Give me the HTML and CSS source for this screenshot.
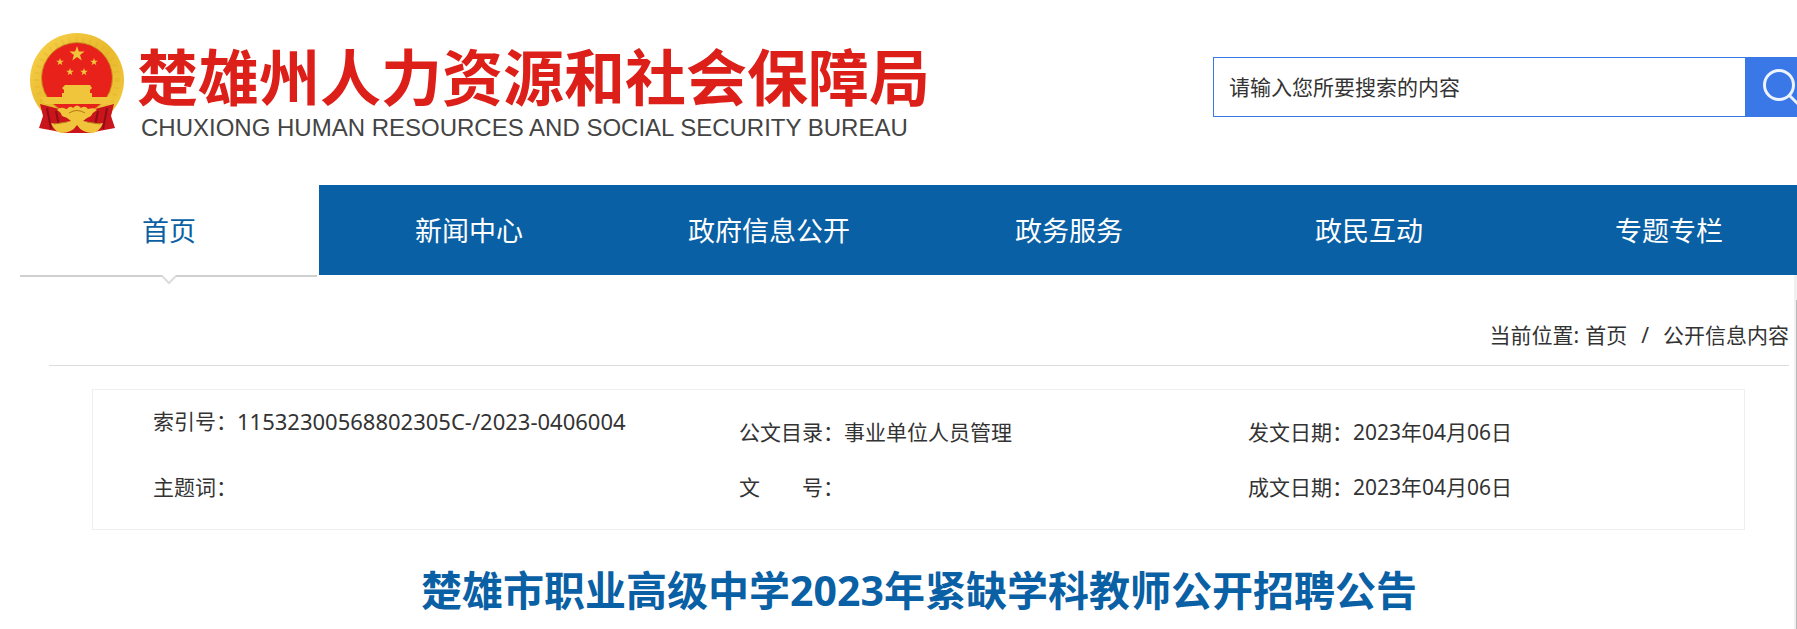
FILE: index.html
```html
<!DOCTYPE html>
<html lang="zh-CN">
<head>
<meta charset="utf-8">
<meta name="viewport" content="width=device-width, initial-scale=1">
<title>楚雄州人力资源和社会保障局</title>
<link rel="stylesheet" href="styles.css">
</head>
<body>
<div class="site-top">
  <header class="header">
    <a class="logo" href="#">
      <svg class="emblem" viewBox="0 0 96 102" aria-hidden="true">
        <defs>
          <linearGradient id="gold" x1="0" y1="0" x2="1" y2="1">
            <stop offset="0" stop-color="#f8d44c"/>
            <stop offset=".5" stop-color="#e9b92d"/>
            <stop offset="1" stop-color="#f3cb3f"/>
          </linearGradient>
          <path id="star" d="M0-10 2.4-3.1 9.5-3.1 3.8 1.2 5.9 8.1 0 3.900-5.9 8.1-3.8 1.2-9.500-3.1-2.4-3.1z"/>
        </defs>
        <circle cx="48" cy="48" r="47" fill="url(#gold)"/>
        <circle cx="48" cy="48" r="40.500" fill="none" stroke="#d3a023" stroke-width="5" stroke-dasharray="2 5" opacity=".2"/>
        <circle cx="48" cy="46" r="35.500" fill="#e8221b" stroke="#c99522" stroke-width="1"/>
        <path d="M11 72 30 77 48 84 66 77 85 72 82 84 86 96 70 99 60 101 36 101 26 99 10 96 14 84z" fill="#c9151b"/>
        <path d="M18 76 22 97M27 79 31 99M78 76 74 97M69 79 65 99" stroke="#8f0d14" stroke-width="2" fill="none"/>
        <g fill="#f0c53c">
          <use href="#star" transform="translate(48 22) scale(.8)"/>
          <use href="#star" transform="translate(31 30) scale(.4)"/>
          <use href="#star" transform="translate(65 30) scale(.4)"/>
          <use href="#star" transform="translate(41 40) scale(.4)"/>
          <use href="#star" transform="translate(55 40) scale(.4)"/>
          <path d="M36 53h25l2 3-2 2v3H35v-3l-2-2z"/>
          <path d="M33 61h30v4h21l-4 7H16l-4-7h21z"/>
          <path d="M38 77q3-4 6-1 4-5 8 0 4-3 7 1 6-2 9 1-4 2-6 6-5 2-8 5l10 2q6 1 10 0-3 8-10 10-11 0-16-8-5 8-16 8-7-2-10-10 4 1 10 0l10-2q-4-4-9-5-1-4-5-6 4-4 9-1z"/>
        </g>
        <path d="M38 90l-13 2M58 90l13 2M40 81q8-5 16 0" stroke="#b67b14" fill="none"/>
      </svg>
      <span class="logo-text">
        <span class="logo-cn">楚雄州人力资源和社会保障局</span>
        <span class="logo-en">CHUXIONG HUMAN RESOURCES AND SOCIAL SECURITY BUREAU</span>
      </span>
    </a>
    <form class="search" role="search">
      <input class="search-input" type="text" placeholder="请输入您所要搜索的内容" aria-label="请输入您所要搜索的内容">
      <button class="search-button" type="submit" aria-label="搜索">
        <svg class="search-icon" viewBox="0 0 40 40" aria-hidden="true">
          <circle cx="17" cy="18" r="14.500"/>
          <path d="M27 28 38 39"/>
        </svg>
      </button>
    </form>
  </header>
  <nav class="nav">
    <a class="nav-item nav-current" href="#">首页
      <svg class="nav-notch" viewBox="0 0 16 10" aria-hidden="true"><path class="notch-fill" d="M1 0 8 8 15 0z"/><path class="notch-line" d="M1 1 8 8 15 1"/></svg>
    </a>
    <a class="nav-item" href="#">新闻中心</a>
    <a class="nav-item" href="#">政府信息公开</a>
    <a class="nav-item" href="#">政务服务</a>
    <a class="nav-item" href="#">政民互动</a>
    <a class="nav-item" href="#">专题专栏</a>
  </nav>
</div>
<div class="body-row">
  <main class="content">
    <div class="breadcrumb">
      <span>当前位置:</span>
      <a href="#">首页</a>
      <span class="slash">/</span>
      <a href="#">公开信息内容</a>
    </div>
    <dl class="meta">
      <div class="meta-item meta-index"><dt>索引号：</dt><dd>11532300568802305C-/2023-0406004</dd></div>
      <div class="meta-item"><dt>公文目录：</dt><dd>事业单位人员管理</dd></div>
      <div class="meta-item"><dt>发文日期：</dt><dd>2023年04月06日</dd></div>
      <div class="meta-item"><dt>主题词：</dt><dd></dd></div>
      <div class="meta-item"><dt>文　　号：</dt><dd></dd></div>
      <div class="meta-item"><dt>成文日期：</dt><dd>2023年04月06日</dd></div>
    </dl>
    <h1 class="title">楚雄市职业高级中学2023年紧缺学科教师公开招聘公告</h1>
  </main>
  <div class="scroll-track"><div class="scroll-thumb"></div></div>
</div>
</body>
</html>
```

FILE: styles.css
```css
* {
  box-sizing: border-box;
}

body {
  margin: 0;
  min-height: 100vh;
  display: flex;
  flex-direction: column;
  overflow-x: hidden;
  background: #fff;
  color: #333;
  font: 21px/30px "Noto Sans", "Noto Sans CJK SC", sans-serif;
}

a {
  color: inherit;
  text-decoration: none;
}

/* The banner and menu run past the right edge of the window. */
.site-top {
  margin: 0 -22px 0 19px;
}

.header {
  display: flex;
  justify-content: space-between;
  align-items: flex-start;
  padding-bottom: 39px;
}

.logo {
  display: flex;
  gap: 12px;
  padding: 32px 0 0 10px;
}

.emblem {
  width: 96px;
  height: 102px;
}

.logo-text {
  display: flex;
  flex-direction: column;
  padding-top: 8px;
  white-space: nowrap;
}

.logo-cn {
  color: #dc1f18;
  font: 700 61px/70px "Noto Sans CJK SC", sans-serif;
}

.logo-en {
  padding-left: 4px;
  color: #444;
  font: 24px/36px "Liberation Sans", sans-serif;
}

.search {
  display: flex;
  width: 606px;
  height: 60px;
  margin-top: 57px;
}

.search-input {
  flex: 1;
  min-width: 0;
  padding: 0 15px;
  border: 1px solid #3a78e7;
  border-right: 0;
  background: #fff;
  color: #333;
  font: inherit;
}

.search-input::placeholder {
  color: #333;
  opacity: 1;
}

.search-button {
  width: 74px;
  padding: 0 0 0 17px;
  border: 0;
  background: #3a78e7;
  text-align: left;
}

.search-icon {
  display: block;
  width: 40px;
  height: 40px;
  fill: none;
  stroke: #eef4ff;
  stroke-width: 3;
}

.nav {
  display: flex;
}

.nav-item {
  flex: 1;
  height: 90px;
  background: #0a60a4;
  color: #fff;
  font-size: 27px;
  line-height: 92px;
  text-align: center;
}

.nav-current {
  position: relative;
  background: #fff;
  box-shadow: 0 2px 0 #d0d0d0;
  clip-path: inset(0 2px -12px 1px);
  color: #0a60a4;
}

.nav-notch {
  position: absolute;
  top: 100%;
  left: 50%;
  width: 16px;
  height: 10px;
  margin-left: -8px;
}

.notch-fill {
  fill: #fff;
}

.notch-line {
  fill: none;
  stroke: #ddd;
  stroke-width: 2;
}

.body-row {
  flex: 1;
  display: flex;
}

.content {
  flex: 1;
  padding: 45px 5px 0 49px;
}

.breadcrumb {
  display: flex;
  justify-content: flex-end;
  gap: 6px;
  padding-bottom: 15px;
  border-bottom: 1px solid #ddd;
}

.slash {
  padding: 0 8px;
}

.meta {
  display: grid;
  grid-template-columns: 586fr 509fr 496fr;
  row-gap: 14px;
  margin: 23px 44px 0 43px;
  padding: 16px 0 27px 60px;
  border: 1px solid #eee;
}

.meta-item {
  display: flex;
  align-items: flex-end;
  height: 41px;
  white-space: nowrap;
}

.meta-index {
  align-items: flex-start;
}

.meta dd {
  margin: 0;
}

.meta-index dd {
  font-size: 22px;
}

.title {
  margin: 30px 0 0;
  color: #0a60a4;
  font-size: 41px;
  line-height: 60px;
  text-align: center;
}

.scroll-track {
  width: 3px;
  padding: 25px 0 0 2px;
  display: flex;
  background: #f0f0f0;
}

.scroll-thumb {
  flex: 1;
  background: #b8b8b8;
}
```
